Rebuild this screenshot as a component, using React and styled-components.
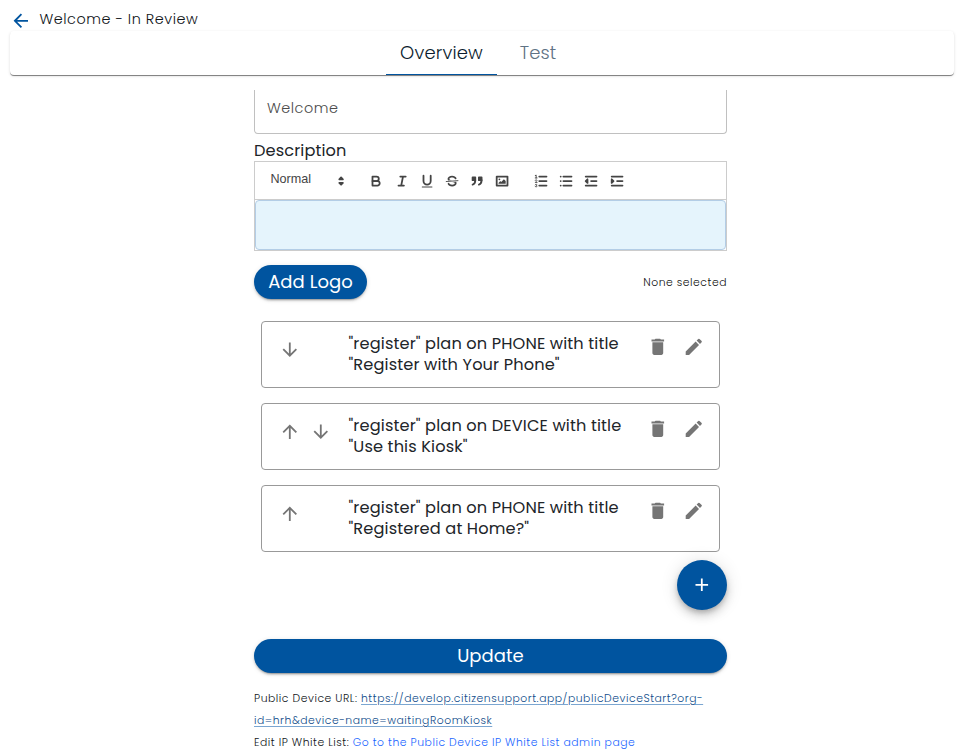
import React from 'react';
import styled, { createGlobalStyle, css } from 'styled-components';

const BLUE = '#00549f';

const GlobalStyle = createGlobalStyle`
  *, *::before, *::after { box-sizing: border-box; }
  html, body { margin: 0; padding: 0; height: 749px; overflow: hidden; background: #fff; }
  body { font-family: Poppins, Inter, 'Open Sans', sans-serif; color: #212529; }
`;

const Page = styled.div`
  width: 962px;
  height: 749px;
  display: flex;
  flex-direction: column;
  overflow: hidden;
`;

const Header = styled.header`
  height: 31px;
  flex: none;
  display: flex;
  padding: 8px 0 0 10px;
`;

const BackButton = styled.button`
  all: unset;
  width: 22px;
  height: 22px;
  margin-top: 2px;
  cursor: pointer;
  svg { display: block; width: 21.6px; height: 21.6px; fill: ${BLUE}; }
`;

const Title = styled.h1`
  margin: 0 0 0 7.5px;
  font-size: 14.4px;
  line-height: 22px;
  font-weight: 300;
  letter-spacing: 0.53px;
  color: #101418;
  white-space: nowrap;
`;

const TabBar = styled.nav`
  flex: none;
  width: 944px;
  height: 44px;
  margin-left: 10px;
  display: flex;
  padding-left: 376px;
  border-radius: 4px;
  background: #fff;
  box-shadow: 0 1px 0 0 rgba(0, 0, 0, 0.3), 0 2px 1px -1px rgba(0, 0, 0, 0.2), 0 1px 3px 0 rgba(0, 0, 0, 0.14);
`;

const Tab = styled.button`
  all: unset;
  box-sizing: border-box;
  height: 44px;
  width: ${(p) => p.$width}px;
  text-align: center;
  font-size: 18px;
  font-weight: 300;
  line-height: 44px;
  letter-spacing: 0.15px;
  color: ${(p) => (p.$active ? '#0b1c2e' : '#5f7385')};
  border-bottom: 1px solid ${(p) => (p.$active ? BLUE : 'transparent')};
  cursor: pointer;
`;

const Content = styled.main`
  width: 473px;
  height: 659px;
  margin: 15px 0 0 254px;
  flex: none;
  display: flex;
  flex-direction: column;
`;

const NameField = styled.div`
  height: 44px;
  flex: none;
  border: 1px solid #c0c0c0;
  border-top: 0;
  border-radius: 0 0 4px 4px;
  padding-left: 12px;
  font-size: 14.4px;
  line-height: 36px;
  font-weight: 300;
  letter-spacing: 0.53px;
  color: #4c4c4c;
`;

const FieldLabel = styled.label`
  height: 27px;
  flex: none;
  padding-top: 5px;
  font-size: 16.2px;
  line-height: 24px;
  letter-spacing: 0.1px;
`;

const Toolbar = styled.div`
  height: 38px;
  flex: none;
  display: flex;
  padding: 8.5px 7.2px;
  border: 1px solid #ccc;
  border-bottom: 0;
`;

const Picker = styled.div`
  width: 88.2px;
  height: 21.6px;
  margin-right: 13.5px;
  padding: 0 1px 0 8.3px;
  display: flex;
  justify-content: space-between;
  align-items: center;
  font-family: 'Liberation Sans', Arial, sans-serif;
  font-size: 12.6px;
  color: #444;
`;

const PickerLabel = styled.span`
  margin-bottom: 4px;
`;

const Tool = styled.button`
  all: unset;
  width: 25.2px;
  height: 21.6px;
  display: flex;
  align-items: center;
  justify-content: center;
  cursor: pointer;
`;

const ToolGroup = styled.div`
  display: flex;
  margin-right: 13.5px;
`;

const QuillSvg = styled.svg`
  width: 16.2px;
  height: 16.2px;
  fill: none;
  stroke: #444;
  stroke-width: 2;
  stroke-linecap: round;
  stroke-linejoin: round;
  .fill { fill: #444; stroke: none; }
  .even { fill: #444; fill-rule: evenodd; }
  .solid { fill: #444; }
  .thin { stroke-width: 1; }
`;

const EditorFrame = styled.div`
  height: 52px;
  flex: none;
  border: 1px solid #ccc;
`;

const Editor = styled.div`
  height: 50px;
  border: 1px solid #b3cde6;
  border-radius: 4px;
  background: #e5f4fc;
`;

const LogoRow = styled.div`
  height: 34px;
  flex: none;
  margin-top: 14px;
  display: flex;
  justify-content: space-between;
  align-items: center;
`;

const pill = css`
  all: unset;
  box-sizing: border-box;
  height: 34px;
  border-radius: 17px;
  background: ${BLUE};
  color: #fff;
  text-align: center;
  font-size: 18px;
  line-height: 34px;
  font-weight: 400;
  letter-spacing: 0.05px;
  cursor: pointer;
  box-shadow: 0 3px 1px -2px rgba(0, 0, 0, 0.2), 0 2px 2px 0 rgba(0, 0, 0, 0.14), 0 1px 5px 0 rgba(0, 0, 0, 0.12);
`;

const LogoButton = styled.button`
  ${pill}
  width: 113px;
`;

const UpdateButton = styled.button`
  ${pill}
  flex: none;
  width: 473px;
  margin-top: 29px;
`;

const Note = styled.span`
  padding-top: 1px;
  font-size: 10.8px;
  font-weight: 300;
  letter-spacing: 0.54px;
  color: #111;
`;

const PlanList = styled.ul`
  list-style: none;
  margin: 22px 7px 0;
  padding: 0;
  display: flex;
  flex-direction: column;
  gap: 15px;
`;

const Plan = styled.li`
  width: 459px;
  height: 67px;
  display: flex;
  border: 1px solid #999;
  border-radius: 4px;
`;

const Moves = styled.div`
  width: 86.5px;
  display: flex;
  gap: 9px;
  padding: 17px 0 0 17px;
`;

const IconButton = styled.button`
  all: unset;
  width: 22px;
  height: 22px;
  cursor: pointer;
  svg { display: block; width: 21.6px; height: 21.6px; fill: #757575; }
`;

const PlanText = styled.div`
  flex: 1;
  padding-top: 11px;
  font-size: 16.2px;
  line-height: 21px;
  letter-spacing: 0.13px;
  white-space: nowrap;
`;

const Actions = styled.div`
  display: flex;
  gap: 14px;
  padding: 14px 14px 0 0;
`;

const AddButton = styled.button`
  all: unset;
  flex: none;
  align-self: flex-end;
  width: 50px;
  height: 50px;
  margin-top: 8px;
  display: flex;
  align-items: center;
  justify-content: center;
  border-radius: 50%;
  background: ${BLUE};
  cursor: pointer;
  box-shadow: 0 3px 5px -1px rgba(0, 0, 0, 0.2), 0 6px 10px 0 rgba(0, 0, 0, 0.14), 0 1px 18px 0 rgba(0, 0, 0, 0.12);
  svg { width: 21.6px; height: 21.6px; fill: #fff; }
`;

const Links = styled.div`
  margin-top: 15px;
  font-size: 10.8px;
  font-weight: 300;
  line-height: 22px;
  letter-spacing: 0.54px;
  color: #101418;
`;

const DeviceLink = styled.a`
  color: #0f4c8a;
  text-decoration: underline;
  text-decoration-color: #7ba6d1;
  text-underline-offset: 2px;
`;

const AdminLink = styled.a`
  color: #1a66ff;
`;

const MATERIAL = {
  back: 'M20 11H7.83l5.59-5.59L12 4l-8 8 8 8 1.41-1.41L7.83 13H20v-2z',
  up: 'M4 12l1.41 1.41L11 7.83V20h2V7.83l5.58 5.59L20 12l-8-8-8 8z',
  down: 'M20 12l-1.41-1.41L13 16.17V4h-2v12.17l-5.58-5.59L4 12l8 8 8-8z',
  trash: 'M6 19c0 1.1.9 2 2 2h8c1.1 0 2-.9 2-2V7H6v12zM19 4h-3.5l-1-1h-5l-1 1H5v2h14V4z',
  edit: 'M3 17.25V21h3.75L17.81 9.94l-3.75-3.75L3 17.25zM20.71 7.04c.39-.39.39-1.02 0-1.41l-2.34-2.34a.9959.9959 0 0 0-1.41 0l-1.83 1.83 3.75 3.75 1.83-1.83z',
  add: 'M19 13h-6v6h-2v-6H5v-2h6V5h2v6h6v2z',
};

const Icon = ({ name }) => (
  <svg viewBox="0 0 24 24" aria-hidden="true">
    <path d={MATERIAL[name]} />
  </svg>
);

const formatTools = [
  ['Bold', <>
    <path d="M5,4H9.5A2.5,2.5,0,0,1,12,6.5v0A2.5,2.5,0,0,1,9.5,9H5V4Z" />
    <path d="M5,9h5.5A2.5,2.5,0,0,1,13,11.5v0A2.5,2.5,0,0,1,10.5,14H5V9Z" />
  </>],
  ['Italic', <path d="M7,4H13M5,14H11M8,14L10,4" />],
  ['Underline', <>
    <path d="M5,3V9a4.012,4.012,0,0,0,4,4H9a4.012,4.012,0,0,0,4-4V3" />
    <rect className="fill" x="3" y="15" width="12" height="1" rx="0.5" />
  </>],
  ['Strike', <>
    <path className="thin" d="M15.5,8.5L2.5,9.5" />
    <path className="fill" d="M9.007,8C6.542,7.791,6,7.519,6,6.5,6,5.792,7.283,5,9,5c1.571,0,2.765.679,2.969,1.309a1,1,0,0,0,1.9-.617C13.356,4.106,11.354,3,9,3,6.2,3,4,4.538,4,6.5a3.2,3.2,0,0,0,.5,1.843Z" />
    <path className="fill" d="M8.984,10C11.457,10.208,12,10.479,12,11.5c0,0.708-1.283,1.5-3,1.5-1.571,0-2.765-.679-2.969-1.309a1,1,0,1,0-1.9.617C4.644,13.894,6.646,15,9,15c2.8,0,5-1.538,5-3.5a3.2,3.2,0,0,0-.5-1.843Z" />
  </>],
  ['Blockquote', <>
    <rect className="solid" x="4" y="5" width="3" height="3" />
    <rect className="solid" x="11" y="5" width="3" height="3" />
    <path className="even" d="M7,8c0,4.031-3,5-3,5" />
    <path className="even" d="M14,8c0,4.031-3,5-3,5" />
  </>],
  ['Image', <>
    <rect x="3" y="4" width="12" height="10" />
    <circle className="fill" cx="6" cy="7" r="1" />
    <polyline className="fill" points="5 12 5 11 7 9 8 10 11 7 13 9 13 12 5 12" />
  </>],
];

const listTools = [
  ['Ordered list', <>
    <path d="M7,4H15M7,9H15M7,14H15" />
    <path className="thin" d="M2.5,5.5H4.5" />
    <path className="fill" d="M3.5,6A0.5,0.5,0,0,1,3,5.5V3.085l-0.276.138A0.5,0.5,0,0,1,2.053,3c-0.124-.247-0.023-0.324.224-0.447l1-.5A0.5,0.5,0,0,1,4,2.5v3A0.5,0.5,0,0,1,3.5,6Z" />
    <path className="thin" d="M4.5,10.5h-2c0-.234,1.85-1.076,1.85-2.234A0.959,0.959,0,0,0,2.5,8.156" />
    <path className="thin" d="M2.5,14.846a0.959,0.959,0,0,0,1.85-.109A0.7,0.7,0,0,0,3.75,14a0.688,0.688,0,0,0,.6-0.736,0.959,0.959,0,0,0-1.85-.109" />
  </>],
  ['Bullet list', <path d="M6,4H15M6,9H15M6,14H15M3,4H3M3,9H3M3,14H3" />],
  ['Outdent', <>
    <path d="M3,14H15M3,4H15M9,9H15" />
    <polyline className="solid" points="5 7 5 11 3 9 5 7" />
  </>],
  ['Indent', <>
    <path d="M3,14H15M3,4H15M9,9H15" />
    <polyline className="solid" points="3 7 3 11 5 9 3 7" />
  </>],
];

const Tools = ({ items }) => (
  <ToolGroup>
    {items.map(([label, shape]) => (
      <Tool key={label} aria-label={label}>
        <QuillSvg viewBox="0 0 18 18">{shape}</QuillSvg>
      </Tool>
    ))}
  </ToolGroup>
);

const plans = [
  { moves: ['down'], lines: ['"register" plan on PHONE with title', '"Register with Your Phone"'] },
  { moves: ['up', 'down'], lines: ['"register" plan on DEVICE with title', '"Use this Kiosk"'] },
  { moves: ['up'], lines: ['"register" plan on PHONE with title', '"Registered at Home?"'] },
];

export default function App() {
  return (
    <Page>
      <GlobalStyle />
      <Header>
        <BackButton aria-label="Back"><Icon name="back" /></BackButton>
        <Title>Welcome - In Review</Title>
      </Header>
      <TabBar>
        <Tab $active $width={111}>Overview</Tab>
        <Tab $width={82}>Test</Tab>
      </TabBar>
      <Content>
        <NameField>Welcome</NameField>
        <FieldLabel>Description</FieldLabel>
        <Toolbar>
          <Picker>
            <PickerLabel>Normal</PickerLabel>
            <QuillSvg viewBox="0 0 18 18">
              <polygon points="7 11 9 13 11 11 7 11" />
              <polygon points="7 7 9 5 11 7 7 7" />
            </QuillSvg>
          </Picker>
          <Tools items={formatTools} />
          <Tools items={listTools} />
        </Toolbar>
        <EditorFrame><Editor /></EditorFrame>
        <LogoRow>
          <LogoButton>Add Logo</LogoButton>
          <Note>None selected</Note>
        </LogoRow>
        <PlanList>
          {plans.map((plan, i) => (
            <Plan key={i}>
              <Moves>
                {plan.moves.map((m) => (
                  <IconButton key={m} aria-label={m}><Icon name={m} /></IconButton>
                ))}
              </Moves>
              <PlanText>
                {plan.lines.map((text) => (
                  <div key={text}>{text}</div>
                ))}
              </PlanText>
              <Actions>
                <IconButton aria-label="Delete"><Icon name="trash" /></IconButton>
                <IconButton aria-label="Edit"><Icon name="edit" /></IconButton>
              </Actions>
            </Plan>
          ))}
        </PlanList>
        <AddButton aria-label="Add"><Icon name="add" /></AddButton>
        <UpdateButton>Update</UpdateButton>
        <Links>
          <div>
            Public Device URL:{' '}
            <DeviceLink>https://develop.citizensupport.app/publicDeviceStart?org-id=hrh&amp;device-name=waitingRoomKiosk</DeviceLink>
          </div>
          <div>
            Edit IP White List:{' '}
            <AdminLink>Go to the Public Device IP White List admin page</AdminLink>
          </div>
        </Links>
      </Content>
    </Page>
  );
}
